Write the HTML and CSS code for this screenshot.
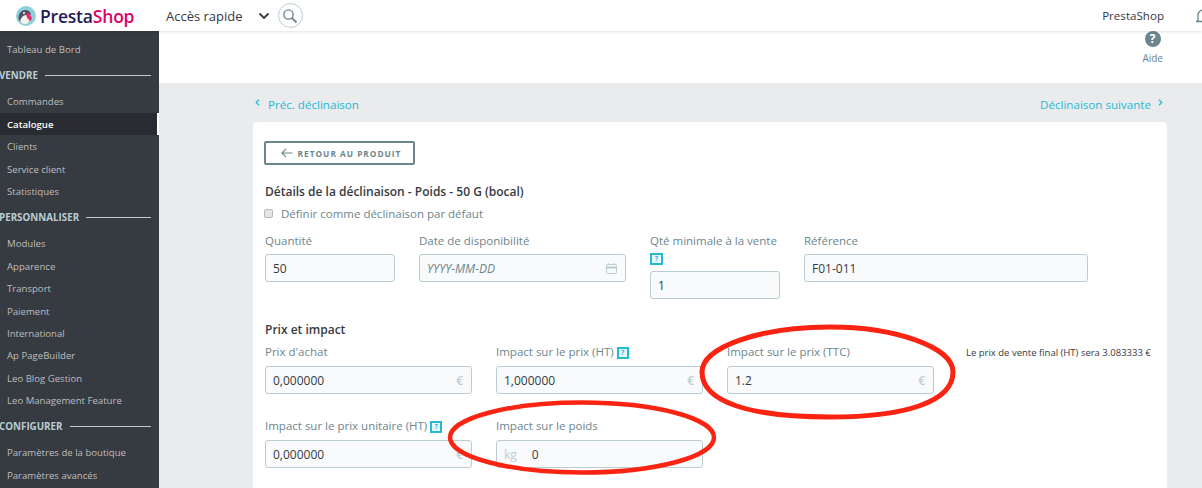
FILE: index.html
```html
<!DOCTYPE html>
<html lang="fr">
<head>
  <meta charset="UTF-8" />
  <meta name="viewport" content="width=device-width, initial-scale=1.0"/>
  <title>PrestaShop</title>
  <link rel="stylesheet" href="styles.css">
</head>
<body>
  <header class="topbar">
    <a class="logo">
      <svg class="logo-mark" width="20" height="20" viewBox="0 0 20 20">
        <circle cx="10" cy="10" r="10" fill="#8fd0dc"/>
        <path d="M2.5 12c0-5 3-8 7-8 3 0 5 2 5.5 4l-3 2-2 5-5 1c-1.5-1-2.5-2-2.5-4z" fill="#50535f"/>
        <path d="M4 15c1-3 3-6 6-6 2 0 3 2 3 5 0 3-2 4-4 4s-4-1-5-3z" fill="#f4f2ec"/>
        <path d="M10 8.5l3-2 3 6-1.5 2.5-3-2.5z" fill="#e8286e"/>
        <circle cx="8" cy="7" r="1.1" fill="#f4f2ec"/>
      </svg>
      <span class="logo-text">Presta<span class="logo-shop">Shop</span></span>
    </a>
    <span class="quick">Accès rapide</span>
    <svg class="chevron" width="12" height="8" viewBox="0 0 12 8"><path d="M1.5 1.5L6 6l4.5-4.5" fill="none" stroke="#363a41" stroke-width="1.8"/></svg>
    <span class="search-btn">
      <svg width="16" height="16" viewBox="0 0 16 16"><circle cx="6.5" cy="6.5" r="4.6" fill="none" stroke="#6c868e" stroke-width="1.4"/><path d="M10 10l4.5 4.5" stroke="#6c868e" stroke-width="1.8"/></svg>
    </span>
    <span class="shop-name">PrestaShop</span>
    <svg class="bell" width="14" height="18" viewBox="0 0 14 18"><path d="M2 13V8a5 5 0 0 1 10 0v5l1.5 1.5h-13z" fill="none" stroke="#6c868e" stroke-width="1.3"/></svg>
  </header>

  <div class="layout">
    <nav class="sidebar">
      <a class="nav-item">Tableau de Bord</a>
      <div class="nav-title">Vendre</div>
      <a class="nav-item">Commandes</a>
      <a class="nav-item active">Catalogue</a>
      <a class="nav-item">Clients</a>
      <a class="nav-item">Service client</a>
      <a class="nav-item">Statistiques</a>
      <div class="nav-title">Personnaliser</div>
      <a class="nav-item">Modules</a>
      <a class="nav-item">Apparence</a>
      <a class="nav-item">Transport</a>
      <a class="nav-item">Paiement</a>
      <a class="nav-item">International</a>
      <a class="nav-item">Ap PageBuilder</a>
      <a class="nav-item">Leo Blog Gestion</a>
      <a class="nav-item">Leo Management Feature</a>
      <div class="nav-title">Configurer</div>
      <a class="nav-item">Paramètres de la boutique</a>
      <a class="nav-item">Paramètres avancés</a>
    </nav>

    <main class="main">
      <div class="toolbar">
        <div class="help">
          <span class="help-icon">?</span>
          <span class="help-label">Aide</span>
        </div>
      </div>

      <div class="content">
        <div class="pager">
          <a class="pager-link">
            <svg class="caret" width="5" height="7" viewBox="0 0 5 7"><path d="M4 .8L1.2 3.5 4 6.2" fill="none" stroke="#25b9d7" stroke-width="1.2"/></svg>
            Préc. déclinaison
          </a>
          <a class="pager-link">
            Déclinaison suivante
            <svg class="caret" width="5" height="7" viewBox="0 0 5 7"><path d="M1 .8L3.8 3.5 1 6.2" fill="none" stroke="#25b9d7" stroke-width="1.2"/></svg>
          </a>
        </div>

        <section class="card">
          <a class="back-btn">
            <svg width="12" height="10" viewBox="0 0 12 10"><path d="M11.5 5H1M5 .8L.9 5 5 9.2" fill="none" stroke="#6c868e" stroke-width="1.1"/></svg>
            Retour au produit
          </a>

          <h2 class="section-title">Détails de la déclinaison - Poids - 50 G (bocal)</h2>
          <label class="check-row"><input type="checkbox" class="check"> Définir comme déclinaison par défaut</label>

          <div class="row row-details">
            <div class="field w-130">
              <label>Quantité</label>
              <div class="box"><span class="value">50</span></div>
            </div>
            <div class="field w-207">
              <label>Date de disponibilité</label>
              <div class="box"><span class="value placeholder">YYYY-MM-DD</span>
                <svg class="cal" width="11" height="11" viewBox="0 0 11 11"><rect x=".5" y="1.5" width="10" height="9" rx="1" fill="none" stroke="#bbcdd2"/><path d="M0 4.5h11" stroke="#bbcdd2" stroke-width="2"/><path d="M3 0v2M8 0v2" stroke="#bbcdd2"/></svg>
              </div>
            </div>
            <div class="field w-130">
              <label>Qté minimale à la vente</label>
              <span class="hint hint-block">?</span>
              <div class="box"><span class="value">1</span></div>
            </div>
            <div class="field w-284">
              <label>Référence</label>
              <div class="box"><span class="value">F01-011</span></div>
            </div>
          </div>

          <h2 class="section-title title-price">Prix et impact</h2>
          <div class="row row-price">
            <div class="field w-207">
              <label>Prix d'achat</label>
              <div class="box"><span class="value">0,000000</span><span class="unit">€</span></div>
            </div>
            <div class="field w-207">
              <label>Impact sur le prix (HT) <span class="hint">?</span></label>
              <div class="box"><span class="value">1,000000</span><span class="unit">€</span></div>
            </div>
            <div class="field w-207">
              <label>Impact sur le prix (TTC)</label>
              <div class="box"><span class="value">1.2</span><span class="unit">€</span></div>
            </div>
            <p class="final-price">Le prix de vente final (HT) sera 3.083333 €</p>
          </div>

          <div class="row row-unit">
            <div class="field w-207">
              <label>Impact sur le prix unitaire (HT) <span class="hint">?</span></label>
              <div class="box"><span class="value">0,000000</span><span class="unit">€</span></div>
            </div>
            <div class="field w-207">
              <label>Impact sur le poids</label>
              <div class="box"><span class="prefix">kg</span><span class="value">0</span></div>
            </div>
          </div>
        </section>
      </div>
    </main>
  </div>

  <!-- hand drawn red circles on top of the form -->
  <svg class="marks" width="1202" height="488" viewBox="0 0 1202 488">
    <path d="M702 372C702 347 760 327 830 327C895 327 953 347 953 372C953 402 905 417 830 417C750 417 702 402 702 372z" fill="none" stroke="#fb2412" stroke-width="5"/>
    <ellipse cx="582" cy="437.5" rx="132" ry="35" fill="none" stroke="#fb2412" stroke-width="4.5"/>
  </svg>
</body>
</html>
```

FILE: styles.css
```css
* {
  box-sizing: border-box;
}

html, body {
  height: 488px;
  overflow: hidden;
}

body {
  margin: 0;
  font-family: "Open Sans", Arial, sans-serif;
  font-size: 12px;
  color: #363a41;
  background: #eaebec;
}

.topbar {
  display: flex;
  align-items: center;
  height: 31px;
  background: #fff;
  box-shadow: 0 1px 3px rgba(0, 0, 0, 0.12);
  position: relative;
  z-index: 2;
}

.logo {
  display: flex;
  align-items: center;
  margin-left: 16px;
  width: 150px;
}

.logo-mark {
  margin-right: 4px;
}

.logo-text {
  font-size: 17.5px;
  font-weight: 600;
  color: #251b5b;
  letter-spacing: -0.2px;
}

.logo-shop {
  color: #df0067;
}

.quick {
  font-size: 13px;
  color: #363a41;
}

.chevron {
  margin-left: 15px;
}

.search-btn {
  display: flex;
  align-items: center;
  justify-content: center;
  width: 25px;
  height: 25px;
  margin-left: 8px;
  border: 1px solid #bbcdd2;
  border-radius: 50%;
}

.shop-name {
  margin-left: auto;
  margin-right: 32px;
  font-size: 11.6px;
  color: #363a41;
}

.bell {
  margin-right: -8px;
}

.layout {
  display: flex;
  height: 457px;
}

.sidebar {
  width: 159px;
  flex: none;
  background: #363a41;
  padding-top: 7px;
}

.nav-item {
  display: block;
  height: 22.4px;
  line-height: 22.4px;
  padding: 1px 0 0 7px;
  font-size: 9.6px;
  color: #bebebe;
}

.nav-item.active {
  background: #282b30;
  border-right: 2px solid #fff;
  color: #fff;
  font-weight: 600;
}

.nav-title {
  display: flex;
  align-items: center;
  gap: 7px;
  height: 30px;
  margin-left: -1px;
  margin-right: 8px;
  font-size: 9.8px;
  font-weight: 700;
  text-transform: uppercase;
  color: #bbcdd2;
}

.nav-title::after {
  content: "";
  flex: 1;
  height: 1px;
  background: #bbcdd2;
}

.main {
  flex: 1;
  min-width: 0;
}

.toolbar {
  display: flex;
  justify-content: flex-end;
  height: 52px;
  background: #fff;
  padding-right: 39px;
}

.help {
  display: flex;
  flex-direction: column;
  align-items: center;
}

.help-icon {
  width: 16px;
  height: 16px;
  border-radius: 50%;
  background: #6c868e;
  color: #fff;
  font-size: 12px;
  font-weight: 700;
  line-height: 16px;
  text-align: center;
}

.help-label {
  margin-top: 4px;
  font-size: 10px;
  color: #6c868e;
}

.content {
  padding: 0 35px 0 94px;
}

.pager {
  display: flex;
  justify-content: space-between;
  height: 39px;
  padding: 12px 4px 0 2px;
}

.pager-link {
  display: flex;
  align-items: center;
  gap: 8px;
  height: 19px;
  font-size: 11.6px;
  color: #25b9d7;
}

.pager-link:last-child {
  gap: 7px;
}

.caret {
  position: relative;
  top: -2px;
}

.card {
  background: #fff;
  border-radius: 4px;
  height: 380px;
  padding: 19px 12px;
}

.back-btn {
  display: inline-flex;
  align-items: center;
  justify-content: center;
  gap: 5px;
  width: 151px;
  height: 24px;
  margin-left: -1px;
  padding-left: 3px;
  border: 2px solid #6c868e;
  border-radius: 2px;
  font-size: 8.3px;
  font-weight: 700;
  letter-spacing: 1px;
  text-transform: uppercase;
  color: #6c868e;
}

.section-title {
  margin: 18px 0 0;
  font-size: 12px;
  line-height: 18px;
  font-weight: 600;
  color: #363a41;
}

.check-row {
  display: flex;
  align-items: center;
  height: 18px;
  margin-top: 3px;
  font-size: 11.5px;
  color: #6c868e;
}

.check {
  appearance: none;
  width: 9px;
  height: 9px;
  margin: 0 8px 0 -1px;
  background: #e3e5e7;
  border: 1px solid #b4b8bc;
  border-radius: 2px;
}

.row {
  display: flex;
  align-items: flex-start;
  gap: 24px;
}

.row-details {
  margin-top: 10px;
}

.title-price {
  margin-top: 22px;
}

.row-price {
  margin-top: 4px;
}

.row-unit {
  margin-top: 23px;
}

.field label {
  display: block;
  height: 18px;
  line-height: 18px;
  font-size: 11.5px;
  color: #6c868e;
  white-space: nowrap;
  margin-bottom: 4px;
}

.row-price .field label,
.row-unit .field label {
  margin-bottom: 5px;
}

.w-130 { width: 130px; }
.w-207 { width: 207px; }
.w-284 { width: 284px; }

.box {
  display: flex;
  align-items: center;
  height: 28px;
  padding: 0 8px 0 7px;
  background: #f8fafc;
  border: 1px solid #bbcdd2;
  border-radius: 3px;
}

.value {
  color: #363a41;
}

.value.placeholder {
  font-style: italic;
  color: #6c868e;
}

.unit {
  margin-left: auto;
  color: #bbcdd2;
  font-weight: 600;
}

.cal {
  margin-left: auto;
}

.prefix {
  color: #bbcdd2;
  margin-right: 15px;
}

.hint {
  display: inline-block;
  width: 12px;
  height: 12px;
  border: 2px solid #25b9d7;
  background: #eaf7fa;
  color: #25b9d7;
  font-size: 7px;
  font-weight: 700;
  line-height: 8px;
  text-align: center;
  vertical-align: middle;
}

.hint-block {
  display: block;
  width: 13px;
  margin-top: -1px;
  margin-bottom: 6px;
}

.final-price {
  margin: 0 0 0 8px;
  padding-top: 1px;
  font-size: 9.5px;
  line-height: 18px;
  color: #363a41;
  white-space: nowrap;
}

.marks {
  position: absolute;
  left: 0;
  top: 0;
  z-index: 3;
  pointer-events: none;
}
```
